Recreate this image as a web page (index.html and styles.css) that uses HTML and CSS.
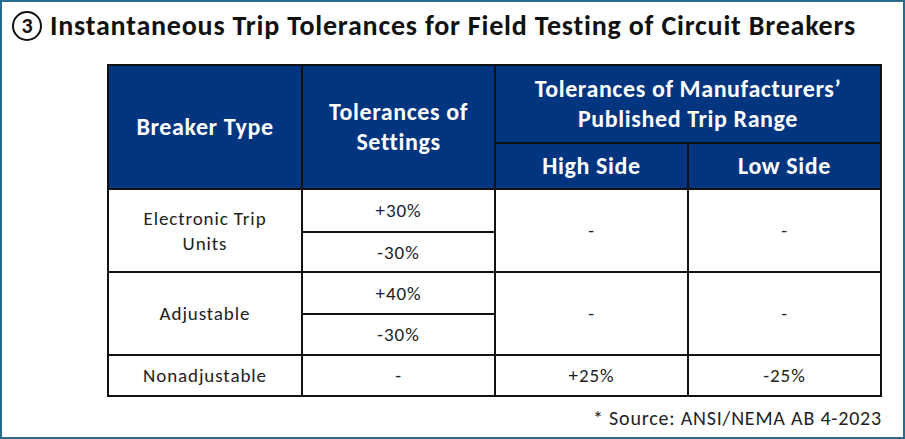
FILE: index.html
```html
<!DOCTYPE html>
<html>
<head>
<meta charset="utf-8">
<link rel="stylesheet" href="styles.css">
</head>
<body>
<div class="frame">
  <h1 class="title"><span class="num">3</span><span>Instantaneous Trip Tolerances for Field Testing of Circuit Breakers</span></h1>
  <table class="tol">
    <colgroup><col class="c1"><col class="c2"><col class="c3"><col class="c4"></colgroup>
    <thead>
      <tr class="h1">
        <th rowspan="2">Breaker Type</th>
        <th rowspan="2">Tolerances of<br>Settings</th>
        <th colspan="2">Tolerances of Manufacturers’<br>Published Trip Range</th>
      </tr>
      <tr class="h2">
        <th>High Side</th>
        <th>Low Side</th>
      </tr>
    </thead>
    <tbody>
      <tr class="r1"><td rowspan="2" class="two">Electronic Trip<br>Units</td><td>+30%</td><td rowspan="2">-</td><td rowspan="2">-</td></tr>
      <tr class="r2"><td>-30%</td></tr>
      <tr class="r3"><td rowspan="2">Adjustable</td><td>+40%</td><td rowspan="2">-</td><td rowspan="2">-</td></tr>
      <tr class="r4"><td>-30%</td></tr>
      <tr class="r5"><td>Nonadjustable</td><td>-</td><td>+25%</td><td>-25%</td></tr>
    </tbody>
  </table>
  <p class="source">* Source: ANSI/NEMA AB 4-2023</p>
</div>
</body>
</html>
```
FILE: styles.css
```css
html, body { margin: 0; padding: 0; background: #fff; }
body { font-family: Carlito, Calibri, Lato, "Open Sans", sans-serif; color: #222; }
.frame {
  box-sizing: border-box;
  width: 905px;
  height: 439px;
  border: 2px solid #2b6a8f;
  padding: 0 21px 0 0;
  display: flex;
  flex-direction: column;
  align-items: flex-end;
}
.title {
  align-self: flex-start;
  margin: 8px 0 0 10px;
  display: flex;
  align-items: center;
  gap: 8px;
  font-size: 28px;
  letter-spacing: 0.8px;
  font-weight: 700;
  color: #111;
  line-height: 32px;
  height: 32px;
}
.num {
  box-sizing: border-box;
  width: 30px;
  height: 30px;
  border: 2.5px solid #111;
  border-radius: 50%;
  display: flex;
  align-items: center;
  justify-content: center;
  font-size: 22px;
  letter-spacing: 0;
  line-height: 1;
}
.tol {
  margin-top: 22px;
  border-collapse: collapse;
  table-layout: fixed;
  width: 775px;
  font-size: 19px;
  letter-spacing: 0.9px;
}
.c1 { width: 194px; }
.c2, .c3, .c4 { width: 193px; }
.tol th, .tol td {
  border: 2px solid #111;
  text-align: center;
  vertical-align: middle;
  padding: 0;
}
.tol th {
  background: #013580;
  color: #fff;
  font-size: 24px;
  letter-spacing: 0.6px;
  font-weight: 700;
  line-height: 30px;
}
.tol td { line-height: 25px; color: #222; }
.h1 { height: 78px; }
.h2 { height: 46px; }
.r1 { height: 43px; }
.r2 { height: 40px; }
.r3 { height: 42px; }
.r4 { height: 41px; }
.r5 { height: 41px; }
.source {
  margin: 9px 0 0 0;
  font-size: 20px;
  letter-spacing: 0.8px;
  color: #222;
}
```
